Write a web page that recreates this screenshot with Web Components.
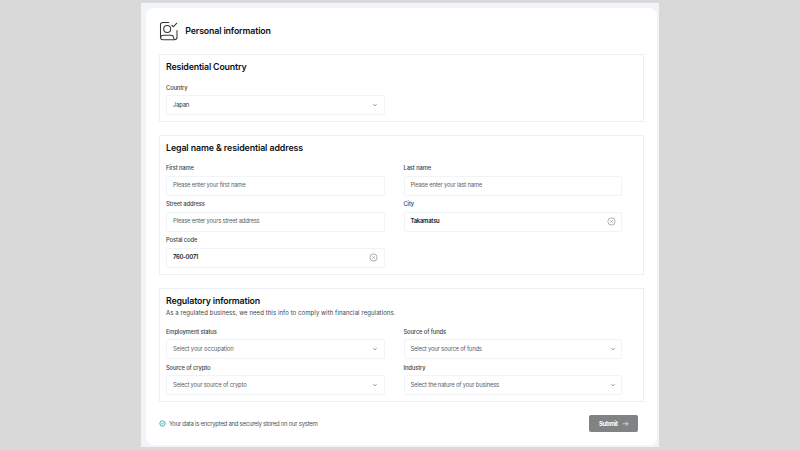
<!DOCTYPE html>
<html lang="en">
<head>
<meta charset="utf-8">
<title>Personal information</title>
<style>
html,body{margin:0;height:100%}
body{background:#d9d9d9;font-family:Inter,"Liberation Sans",sans-serif;color:#0c1013;overflow:hidden}
</style>
</head>
<body>
<kyc-page>
  <page-title slot="head" label="Personal information" w="85.5"></page-title>
  <form-section style="height:68px" label="Residential Country" w="80.5">
    <form-field type="select" label="Country" lw="21.5" value="Japan" vw="16" dark></form-field>
  </form-section>
  <form-section style="height:140px;--gap:9px" label="Legal name &amp; residential address" w="137">
    <form-field label="First name" lw="27.7" value="Please enter your first name" vw="72.5"></form-field>
    <form-field label="Last name" lw="27.5" value="Please enter your last name" vw="71.5"></form-field>
    <form-field label="Street address" lw="38.7" value="Please enter yours street address" vw="86.5"></form-field>
    <form-field type="clear" label="City" lw="10.5" value="Takamatsu" vw="29" filled></form-field>
    <form-field type="clear" label="Postal code" lw="31.3" value="760-0071" vw="25" filled></form-field>
  </form-section>
  <form-section style="height:114px" label="Regulatory information" w="94" note="As a regulated business, we need this info to comply with financial regulations." nw="229.5">
    <form-field type="select" label="Employment status" lw="50.7" value="Select your occupation" vw="60.5"></form-field>
    <form-field type="select" label="Source of funds" lw="42.5" value="Select your source of funds" vw="71.2"></form-field>
    <form-field type="select" label="Source of crypto" lw="44.3" value="Select your source of crypto" vw="73.5"></form-field>
    <form-field type="select" label="Industry" lw="22" value="Select the nature of your business" vw="88.5"></form-field>
  </form-section>
  <page-footer slot="foot"></page-footer>
</kyc-page>
<script>
const esc = s => (s || '').replace(/&/g, '&amp;');
function define(name, render) {
  customElements.define(name, class extends HTMLElement {
    connectedCallback() {
      if (this.shadowRoot) return;
      this.attachShadow({ mode: 'open' }).innerHTML = render(this);
    }
  });
}

/* A single line of text whose tracking is set so that it spans the width in "w". */
customElements.define('tracked-text', class extends HTMLElement {
  connectedCallback() {
    if (this.shadowRoot) return;
    this.attachShadow({ mode: 'open' }).innerHTML =
      '<style>:host{display:block;white-space:nowrap}span{display:inline-block}</style><span><slot></slot></span>';
    const span = this.shadowRoot.querySelector('span');
    const n = this.textContent.length;
    const gap = (parseFloat(this.getAttribute('w')) - span.getBoundingClientRect().width) / n;
    span.style.letterSpacing = gap.toFixed(3) + 'px';
  }
});

define('kyc-page', () => `<style>
:host{display:block;box-sizing:border-box;width:518px;height:444px;margin:3px 0 0 141px;padding:5px 2px 2px 5px;background:#f1f5f9}
main{box-sizing:border-box;height:437px;background:#fff;border-radius:8px;padding:0 13px;display:flex;flex-direction:column}
.stack{display:flex;flex-direction:column;gap:13px}
</style><main><slot name="head"></slot><div class="stack"><slot></slot></div><slot name="foot"></slot></main>`);

define('page-title', e => `<style>
:host{display:flex;align-items:center;height:46px;box-sizing:border-box;padding-bottom:1px;gap:7.3px;font-size:8.8px;font-weight:600;line-height:12px}
svg{display:block;flex:none}
</style>
<svg width="19" height="20" viewBox="0 0 19 20" fill="none" stroke="#34383b" stroke-width="1.05" stroke-linecap="round" stroke-linejoin="round">
<path d="M9.8 1.5H3.7Q1.5 1.5 1.5 3.7V16.3Q1.5 18.7 3.9 18.7H15.3Q18 18.7 18 16V9.5"/>
<circle cx="8.2" cy="8" r="3.5"/>
<path d="M1.7 16.2Q2 14.3 4.5 14.3H12Q14.3 14.3 14.5 16.3Q14.7 18.4 16 18.5"/>
<path d="M12.8 4.2 14.3 5.8 17.8 2.2"/></svg>
<tracked-text w="${e.getAttribute('w')}">${esc(e.getAttribute('label'))}</tracked-text>`);

define('form-section', e => `<style>
:host{display:block;box-sizing:border-box;width:485px;border:1px solid #e9f0f6;padding:6px 0 0 6px}
h2{margin:0;font-size:8.8px;font-weight:600;line-height:12px}
.note{height:14.5px;box-sizing:border-box;padding-top:1px;font-size:6px;line-height:10px;color:#39444c}
.gap{height:var(--gap,9.5px)}
.grid{display:grid;grid-template-columns:218.5px 218.5px;column-gap:19px;row-gap:3px}
.rest{height:5px}
</style>
<h2><tracked-text w="${e.getAttribute('w')}">${esc(e.getAttribute('label'))}</tracked-text></h2>
${e.hasAttribute('note') ? `<div class="note"><tracked-text w="${e.getAttribute('nw')}">${e.getAttribute('note')}</tracked-text></div><div class="rest"></div>` : '<div class="gap"></div>'}
<div class="grid"><slot></slot></div>`);

const glyphs = {
  select: '<svg width="6" height="6" viewBox="0 0 6 6" fill="none" stroke="#77838d" stroke-width=".85"><path d="M1.3 2.2 3 3.8 4.7 2.2"/></svg>',
  clear: '<svg width="9" height="9" viewBox="0 0 9 9" fill="none" stroke="#939ca4" stroke-width=".8"><circle cx="4.5" cy="4.5" r="3.6"/><path d="M3.5 3.5 5.5 5.5M5.5 3.5 3.5 5.5" stroke-width="1"/></svg>'
};
define('form-field', e => `<style>
:host{display:block;height:33px}
.label{font-size:5.8px;font-weight:500;line-height:10px;height:12.5px;color:#3a454c}
.box{box-sizing:border-box;height:20px;border:1px solid #f1f4f7;border-radius:2px;display:flex;align-items:center;justify-content:space-between;padding:0 5.5px 1px 6px;font-size:5.9px;line-height:10px;color:#596269}
:host([dark]) .box{color:#30383e}
:host([filled]) .box{color:#15191c;font-weight:600}
svg{display:block;flex:none;position:relative;top:.5px}
</style>
<div class="label"><tracked-text w="${e.getAttribute('lw')}">${e.getAttribute('label')}</tracked-text></div>
<div class="box"><tracked-text w="${e.getAttribute('vw')}">${e.getAttribute('value')}</tracked-text>${glyphs[e.getAttribute('type')] || ''}</div>`);

define('page-footer', () => `<style>
:host{display:flex;justify-content:space-between;align-items:center;margin-top:13px;padding-right:6.5px;height:17px}
.safe{display:flex;align-items:center;gap:3px;font-size:6px;line-height:10px;color:#4b555d}
svg{display:block}
button{all:unset;box-sizing:border-box;width:48.5px;height:17px;border-radius:2px;background:#808284;color:#fff;display:flex;align-items:center;gap:4px;padding-left:10px;font-size:6px;font-weight:700;line-height:10px}
</style>
<div class="safe"><svg width="7" height="7" viewBox="0 0 7 7" fill="none" stroke="#3ba5ab" stroke-width=".9"><circle cx="3.5" cy="3.5" r="2.7"/><path d="M2.2 3.4 3.2 4.4 5 2.5"/></svg>
<tracked-text w="148.5">Your data is encrypted and securely stored on our system</tracked-text></div>
<button><tracked-text w="18.7">Submit</tracked-text><svg width="7" height="7" viewBox="0 0 7 7" fill="none" stroke="#eceded" stroke-width=".75"><path d="M.8 3.8H6M4 1.8 6 3.8 4 5.8"/></svg></button>`);
</script>
</body>
</html>
